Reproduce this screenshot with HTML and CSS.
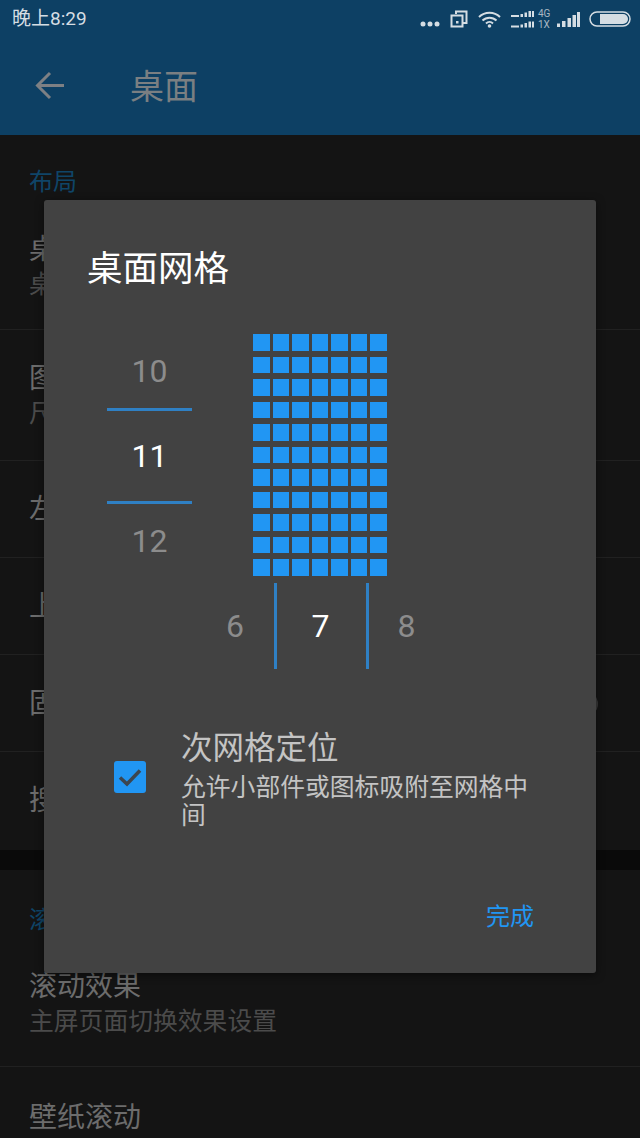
FILE: index.html
```html
<!DOCTYPE html>
<html lang="zh">

<head>
  <meta charset="UTF-8">
  <meta name="viewport" content="width=device-width, initial-scale=1.0">
  <title>桌面</title>
  <link rel="stylesheet" href="styles.css">
</head>

<body>
  <div class="screen">
    <header class="appbar">
      <div class="statusbar">
        <span class="clock">晚上8:29</span>
        <div class="status-icons">
          <svg class="ic-dots" width="20" height="6" viewBox="0 0 20 6"><circle cx="3" cy="3" r="2.500"/><circle cx="10" cy="3" r="2.500"/><circle cx="17" cy="3" r="2.500"/></svg>
          <svg class="ic-copy" width="18" height="18" viewBox="0 0 18 18"><path d="M6 4V1.500h10.500V13H13M1.500 5.500h11v11h-11z"/><rect class="solid" x="6" y="11" width="2.500" height="2.500"/></svg>
          <svg class="ic-wifi" width="23" height="17" viewBox="0 0 23 17"><path d="M1 6a15 15 0 0 1 21 0M4.500 9.500a10 10 0 0 1 14 0M8 12.500a5 5 0 0 1 7 0"/><circle class="solid" cx="11.500" cy="15" r="1.800"/></svg>
          <div class="sim">
            <svg width="23" height="17" viewBox="0 0 23 17"><path class="solid" d="M0 4h8v2H0zM9.500 3H12v3H9.500zM13.500 1.500H16V6h-2.500zM17.500 0H20v6h-2.500zM21 0h2v6h-2zM0 14.500h8v2H0zM9.500 13.500H12v3H9.500zM13.500 12H16v4.500h-2.500zM17.500 10.500H20v6h-2.500zM21 10.500h2v6h-2z"/></svg>
            <div class="sim-labels"><span>4G</span><span>1X</span></div>
          </div>
          <svg class="ic-signal" width="23" height="15" viewBox="0 0 23 15"><path class="solid" d="M0 11.500h3V15H0zM5 9h3.500v6H5zM10.500 6H14v9h-3.500zM15.500 3H19v12h-3.500zM20 0h3v15h-3z"/></svg>
          <svg class="ic-battery" width="42" height="16" viewBox="0 0 42 16"><rect x="1" y="1" width="40" height="14" rx="7"/><path class="fill" d="M11 3h23a5 5 0 0 1 0 10H11z"/></svg>
        </div>
      </div>
      <div class="toolbar">
        <svg class="back" width="30" height="30" viewBox="0 0 30 30"><path d="M29 14.500H3M15 2L2.500 14.500 15 27"/></svg>
        <h1 class="page-title">桌面</h1>
      </div>
    </header>

    <main class="settings">
      <section class="group">
        <h2 class="group-label">布局</h2>
        <div class="row"><div class="row-title">桌面网格</div><div class="row-sub">桌面图标网格大小</div></div>
        <div class="row"><div class="row-title">图标布局</div><div class="row-sub">尺寸、文字、行数</div></div>
        <div class="row"><div class="row-title">左右边距</div></div>
        <div class="row"><div class="row-title">上下边距</div></div>
        <div class="row row-switch"><div class="row-title">固定屏幕方向</div><span class="switch-thumb"></span></div>
        <div class="row"><div class="row-title">搜索栏</div></div>
      </section>
      <section class="group group-last">
        <h2 class="group-label">滚动</h2>
        <div class="row"><div class="row-title">滚动效果</div><div class="row-sub">主屏页面切换效果设置</div></div>
        <div class="row"><div class="row-title">壁纸滚动</div></div>
      </section>
    </main>

    <div class="dialog">
      <h2 class="dialog-title">桌面网格</h2>
      <div class="editor">
        <div class="rows-picker">
          <div class="pick-v">10</div>
          <div class="pick-v current">11</div>
          <div class="pick-v">12</div>
        </div>
        <div class="preview">
          <div class="cells" id="cells"></div>
          <div class="cols-picker">
            <div class="pick-h">6</div>
            <div class="pick-h current">7</div>
            <div class="pick-h">8</div>
          </div>
        </div>
      </div>
      <div class="subgrid">
        <span class="checkbox">
          <svg width="32" height="32" viewBox="0 0 32 32"><path d="M6 16.500l7 6.500L26 9.500"/></svg>
        </span>
        <div class="subgrid-text">
          <div class="subgrid-title">次网格定位</div>
          <div class="subgrid-sub">允许小部件或图标吸附至网格中间</div>
        </div>
      </div>
      <div class="dialog-actions">
        <span class="done">完成</span>
      </div>
    </div>
  </div>

  <script>
    // 7 x 11 preview cells
    const cells = document.getElementById('cells');
    for (let i = 0; i < 77; i++) {
      cells.appendChild(document.createElement('span'));
    }
  </script>
</body>

</html>
```

FILE: styles.css
```css
:root {
  --appbar-bg: #0d4064;
  --page-bg: #141414;
  --dialog-bg: #424242;
  --accent: #2196f3;
  --picker-line: #2f80c4;
  --muted-number: #8c8c8c;
}

* {
  box-sizing: border-box;
}

html,
body {
  margin: 0;
  height: 100%;
}

body {
  background-color: var(--page-bg);
  font-family: Roboto, "Noto Sans CJK SC", sans-serif;
  overflow: hidden;
}

h1,
h2 {
  margin: 0;
  font-weight: 400;
}

.screen {
  position: relative;
  width: 640px;
  height: 1138px;
  overflow: hidden;
}

/* app bar */
.appbar {
  height: 135px;
  background-color: var(--appbar-bg);
}

.statusbar {
  height: 38px;
  padding: 0 9px 0 12px;
  display: flex;
  align-items: center;
  justify-content: space-between;
}

.clock {
  font-size: 19px;
  line-height: 38px;
  color: #d5dde3;
}

.status-icons {
  display: flex;
  align-items: center;
  gap: 10px;
}

.status-icons svg {
  display: block;
  fill: none;
  stroke: #d5dde3;
  stroke-width: 2;
}

.status-icons .solid {
  fill: #d5dde3;
  stroke: none;
}

.status-icons .ic-dots {
  fill: #d5dde3;
  stroke: none;
  margin-top: 10px;
}

.sim {
  display: flex;
  align-items: center;
  gap: 4px;
  margin-right: -5px;
}

.sim-labels {
  display: flex;
  flex-direction: column;
  font-size: 10px;
  line-height: 11px;
  color: #a9b7c2;
  width: 14px;
}

.status-icons .ic-battery {
  margin-left: -1px;
  stroke-width: 1.500;
}

.ic-battery .fill {
  fill: #d5dde3;
  stroke: none;
}

.toolbar {
  height: 97px;
  padding: 0 0 0 35px;
  display: flex;
  align-items: center;
}

.back {
  display: block;
  fill: none;
  stroke: #7d8084;
  stroke-width: 3;
  margin-top: -1px;
}

.page-title {
  margin-left: 65px;
  font-size: 34px;
  line-height: 40px;
  color: #7a7f82;
}

/* dimmed settings list */
.group {
  border-bottom: 20px solid #0a0a0a;
}

.group-last {
  border-bottom: 0;
}

.group-label {
  height: 67px;
  padding: 32px 29px 0;
  font-size: 24px;
  line-height: 30px;
  color: #0f4568;
}

.group-last .group-label {
  height: 66px;
  padding-top: 35px;
}

.row {
  padding: 31px 29px 29px;
  border-bottom: 1px solid #212121;
}

.group-label + .row {
  padding-top: 30px;
  padding-bottom: 27px;
}

.group .row:last-child {
  border-bottom: 0;
  padding-bottom: 31px;
}

.group-last .row,
.group-last .group-label + .row {
  padding-top: 33px;
}

.group-last .group-label + .row {
  padding-bottom: 27px;
}

.row-title {
  font-size: 28px;
  line-height: 36px;
  color: #6c6c6c;
}

.row-sub {
  font-size: 24.800px;
  line-height: 34px;
  color: #4b4b4b;
}

.row-switch {
  position: relative;
}

.switch-thumb {
  position: absolute;
  right: 42px;
  top: 37px;
  width: 24px;
  height: 24px;
  border-radius: 50%;
  background-color: #3a3a3a;
}

/* dialog */
.dialog {
  position: absolute;
  left: 44px;
  top: 200px;
  width: 552px;
  height: 773px;
  padding-top: 47px;
  background-color: var(--dialog-bg);
  border-radius: 3px;
  box-shadow: 0 2px 8px rgba(0, 0, 0, 0.5);
}

.dialog-title {
  padding-left: 43px;
  font-size: 35.500px;
  line-height: 44px;
  color: #fff;
}

.editor {
  display: flex;
  gap: 2px;
  margin-top: 43px;
  padding-left: 63px;
}

.rows-picker {
  width: 85px;
  margin-top: -3px;
}

.pick-v {
  height: 77px;
  font-size: 32px;
  line-height: 75px;
  text-align: center;
  color: var(--muted-number);
}

.pick-v:first-child {
  line-height: 81px;
}

.pick-v.current {
  height: 96px;
  line-height: 90px;
  border-top: 3px solid var(--picker-line);
  border-bottom: 3px solid var(--picker-line);
  color: #fff;
}

.preview {
  width: 252px;
  display: flex;
  flex-direction: column;
  align-items: center;
}

.cells {
  display: grid;
  grid-template-columns: repeat(7, 16.500px);
  grid-auto-rows: 16.500px;
  gap: 6px 3px;
}

.cells span {
  background-color: var(--accent);
}

.cols-picker {
  width: 252px;
  height: 85px;
  margin-top: 7px;
  display: grid;
  grid-template-columns: 80px 95px 77px;
}

.pick-h {
  font-size: 32px;
  line-height: 86px;
  text-align: center;
  color: var(--muted-number);
}

.pick-h:first-child {
  padding-left: 2px;
}

.pick-h:last-child {
  padding-right: 2px;
}

.pick-h.current {
  padding-right: 2px;
  border-left: 3px solid var(--picker-line);
  border-right: 3px solid var(--picker-line);
  color: #fff;
}

.subgrid {
  display: flex;
  align-items: flex-start;
  margin-top: 61px;
  padding-left: 70px;
}

.checkbox {
  flex: none;
  width: 32px;
  height: 32px;
  margin-top: 32px;
  border-radius: 3px;
  background-color: var(--accent);
}

.checkbox svg {
  display: block;
  fill: none;
  stroke: #3c4650;
  stroke-width: 3.500;
}

.subgrid-text {
  width: 360px;
  margin-left: 35px;
}

.subgrid-title {
  font-size: 31.500px;
  line-height: 40px;
  color: #c4c4c4;
}

.subgrid-sub {
  margin-top: 5px;
  font-size: 24.800px;
  line-height: 28px;
  color: #c4c4c4;
}

.dialog-actions {
  display: flex;
  justify-content: flex-end;
  margin-top: 71px;
  padding-right: 62px;
}

.done {
  font-size: 24px;
  line-height: 32px;
  color: var(--accent);
}
```
